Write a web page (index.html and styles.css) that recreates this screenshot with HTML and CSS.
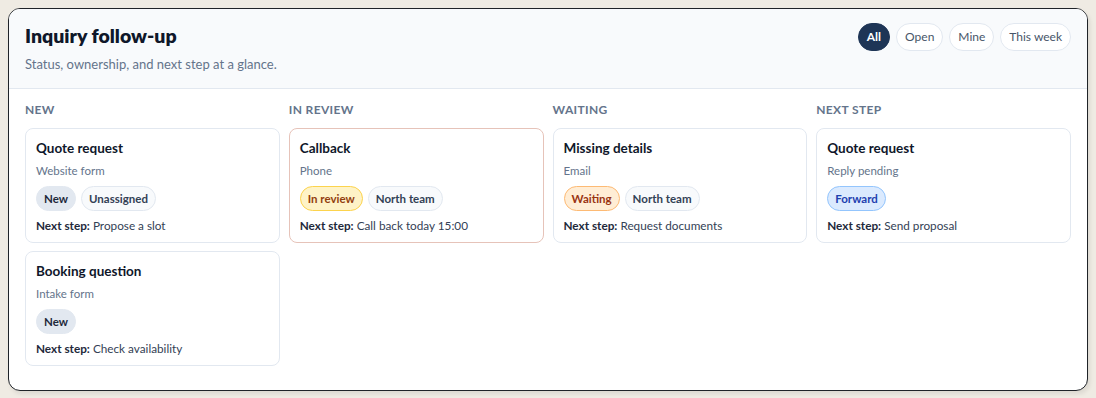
FILE: index.html
```html
<!DOCTYPE html>
<html lang="en">
<head>
<meta charset="utf-8">
<title>Inquiry follow-up</title>
<link rel="stylesheet" href="styles.css">
</head>
<body>
<section class="panel">
  <header class="head">
    <div class="head-text">
      <h1 class="title">Inquiry follow-up</h1>
      <p class="sub">Status, ownership, and next step at a glance.</p>
    </div>
    <nav class="filters">
      <button class="chip chip-active">All</button>
      <button class="chip">Open</button>
      <button class="chip">Mine</button>
      <button class="chip">This week</button>
    </nav>
  </header>
  <div class="board">
    <div class="col">
      <h2 class="col-label">New</h2>
      <article class="card">
        <h3 class="card-title">Quote request</h3>
        <p class="card-src">Website form</p>
        <div class="tags"><span class="tag tag-new">New</span><span class="tag tag-owner">Unassigned</span></div>
        <p class="next"><b>Next step:</b> Propose a slot</p>
      </article>
      <article class="card">
        <h3 class="card-title">Booking question</h3>
        <p class="card-src">Intake form</p>
        <div class="tags"><span class="tag tag-new">New</span></div>
        <p class="next"><b>Next step:</b> Check availability</p>
      </article>
    </div>
    <div class="col">
      <h2 class="col-label">In review</h2>
      <article class="card card-flag">
        <h3 class="card-title">Callback</h3>
        <p class="card-src">Phone</p>
        <div class="tags"><span class="tag tag-review">In review</span><span class="tag tag-owner">North team</span></div>
        <p class="next"><b>Next step:</b> Call back today 15:00</p>
      </article>
    </div>
    <div class="col">
      <h2 class="col-label">Waiting</h2>
      <article class="card">
        <h3 class="card-title">Missing details</h3>
        <p class="card-src">Email</p>
        <div class="tags"><span class="tag tag-wait">Waiting</span><span class="tag tag-owner">North team</span></div>
        <p class="next"><b>Next step:</b> Request documents</p>
      </article>
    </div>
    <div class="col">
      <h2 class="col-label">Next step</h2>
      <article class="card">
        <h3 class="card-title">Quote request</h3>
        <p class="card-src">Reply pending</p>
        <div class="tags"><span class="tag tag-fwd">Forward</span></div>
        <p class="next"><b>Next step:</b> Send proposal</p>
      </article>
    </div>
  </div>
</section>
</body>
</html>
```
FILE: styles.css
```css
* { box-sizing: border-box; }
html, body { margin: 0; }
body {
  background: #efebe3;
  padding: 8px;
  font-family: "Lato", "Noto Sans", sans-serif;
  color: #0f172a;
}
.panel {
  background: #ffffff;
  border: 1px solid #1f2328;
  border-radius: 12px;
  overflow: hidden;
  box-shadow: 2px 3px 4px rgba(0,0,0,0.08);
}
.head {
  display: flex;
  justify-content: space-between;
  align-items: flex-start;
  background: #f8fafc;
  border-bottom: 1px solid #e2e8f0;
  padding: 14px 16px 15px;
}
.title {
  margin: 0;
  font-size: 19.5px;
  line-height: 26px;
  font-weight: 800;
  color: #0f172a;
}
.sub {
  margin: 6px 0 0;
  font-size: 13px;
  line-height: 18px;
  color: #64748b;
}
.filters {
  display: flex;
  gap: 6px;
}
.chip {
  font-family: inherit;
  font-size: 12px;
  line-height: 16px;
  height: 28px;
  padding: 0 8px;
  border-radius: 14px;
  border: 1px solid #e2e8f0;
  background: #ffffff;
  color: #475569;
}
.chip-active {
  background: #1e3556;
  border-color: #1e3556;
  color: #ffffff;
  font-weight: 700;
}
.board {
  display: grid;
  grid-template-columns: repeat(4, 1fr);
  gap: 9px;
  padding: 12px 16px 24px;
}
.col {
  display: flex;
  flex-direction: column;
  gap: 8px;
}
.col-label {
  margin: 0 0 1px;
  font-size: 12px;
  line-height: 18px;
  font-weight: 700;
  letter-spacing: 0.03em;
  text-transform: uppercase;
  color: #64748b;
}
.card {
  border: 1px solid #e2e8f0;
  border-radius: 8px;
  padding: 10px 10px 8px;
  background: #fff;
}
.card-flag { border-color: #e6c3b9; }
.card-title {
  margin: 0;
  font-size: 13.5px;
  line-height: 18px;
  font-weight: 700;
  color: #0f172a;
}
.card-src {
  margin: 6px 0 0;
  font-size: 11.5px;
  line-height: 16px;
  color: #64748b;
}
.tags {
  display: flex;
  gap: 5px;
  margin-top: 7px;
}
.tag {
  display: inline-flex;
  align-items: center;
  height: 25px;
  padding: 0 7px;
  border-radius: 13px;
  font-size: 11.5px;
  font-weight: 700;
  border: 1px solid transparent;
}
.tag-new { background: #e2e8f0; color: #1e293b; border-color: #e2e8f0; }
.tag-owner { background: #f8fafc; color: #334155; border-color: #e2e8f0; }
.tag-review { background: #fef3c7; color: #92400e; border-color: #fcd34d; }
.tag-wait { background: #ffedd5; color: #9a3412; border-color: #fdba74; }
.tag-fwd { background: #dbeafe; color: #1e40af; border-color: #93c5fd; }
.next {
  margin: 7px 0 0;
  font-size: 11.75px;
  line-height: 16px;
  color: #334155;
}
.next b { color: #1e293b; }
```
